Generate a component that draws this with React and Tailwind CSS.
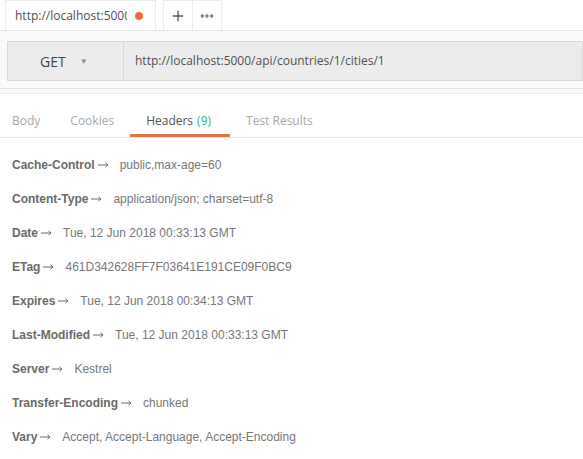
import { Plus, MoreHorizontal } from 'lucide-react'

const headers = [
  ['Cache-Control', 'public,max-age=60'],
  ['Content-Type', 'application/json; charset=utf-8'],
  ['Date', 'Tue, 12 Jun 2018 00:33:13 GMT'],
  ['ETag', '461D342628FF7F03641E191CE09F0BC9'],
  ['Expires', 'Tue, 12 Jun 2018 00:34:13 GMT'],
  ['Last-Modified', 'Tue, 12 Jun 2018 00:33:13 GMT'],
  ['Server', 'Kestrel'],
  ['Transfer-Encoding', 'chunked'],
  ['Vary', 'Accept, Accept-Language, Accept-Encoding'],
]

const tabs = [
  { label: 'Body', cls: 'mr-[30px] pt-[8px]' },
  { label: 'Cookies', cls: 'mr-[16px] pt-[8px]' },
  { label: 'Headers', count: '(9)', cls: 'mr-[16px] border-b-[3px] border-[#e2714a] pl-[16px] pr-[19px] pt-[11px]' },
  { label: 'Test Results', cls: 'pt-[8px]' },
]

function Arrow() {
  return (
    <svg width="11" height="8" viewBox="0 0 11 8" className="ml-[3px] mt-[5px] shrink-0">
      <path d="M0 4H10M7.5 1.8L10 4L7.5 6.2" fill="none" stroke="#6a6a6a" strokeWidth="1" />
    </svg>
  )
}

export default function App() {
  return (
    <div className="h-[459px] w-[583px] overflow-hidden bg-white font-['Open_Sans',sans-serif]">
      {/* tab strip */}
      <div className="flex h-[31px] items-end border-b border-[#e4e4e4] bg-white pl-[5px]">
        <div className="flex h-[30px] w-[151px] items-center justify-between border border-b-0 border-[#ececec] bg-white pl-[9px] pr-[12px]">
          <span className="w-[112px] overflow-hidden whitespace-nowrap text-[12px] text-[#505050]">
            http://localhost:5000/
          </span>
          <span className="h-[8px] w-[8px] rounded-full bg-[#f26b3a]" />
        </div>
        <div className="ml-[7px] flex h-[30px] border border-b-0 border-[#ececec]">
          <div className="flex w-[29px] items-center justify-center border-r border-[#ececec]">
            <Plus size={16} strokeWidth={2} className="text-[#555]" />
          </div>
          <div className="flex w-[28px] items-center justify-center">
            <MoreHorizontal size={16} strokeWidth={3} className="text-[#777]" />
          </div>
        </div>
      </div>

      {/* request bar */}
      <div className="border-b border-[#e2e2e2] bg-[#fafafa] pb-[7px] pl-[7px] pt-[10px]">
        <div className="flex h-[40px] border border-[#d8d8d8] bg-[#ececec]">
          <div className="flex w-[116px] items-center gap-[14px] border-r border-[#d8d8d8] pl-[32px]">
            <span className="text-[14px] text-[#444]">GET</span>
            <span className="text-[8px] text-[#888]">▼</span>
          </div>
          <div className="flex flex-1 items-center pl-[11px] text-[12px] text-[#505050]">
            http://localhost:5000/api/countries/1/cities/1
          </div>
        </div>
      </div>
      <div className="h-[5px] border-b border-[#ececec] bg-[#fafafa]" />

      {/* response tabs */}
      <div className="flex h-[44px] items-end border-b border-[#e6e6e6] pl-[12px]">
        {tabs.map((t) => (
          <div key={t.label} className={`flex h-[40px] items-center ${t.cls}`}>
            <span className={`text-[12px] ${t.count ? 'text-[#505050]' : 'text-[#a8a8a8]'}`}>
              {t.label}
              {t.count && <span className="ml-[4px] text-[#3fae8e]">{t.count}</span>}
            </span>
          </div>
        ))}
      </div>

      {/* headers list */}
      <div className="flex flex-col pl-[12px] pt-[18px] font-['Liberation_Sans',Arial,sans-serif] text-[12px]">
        {headers.map(([k, v]) => (
          <div key={k} className="flex h-[34px] items-start">
            <span className="font-bold text-[#6a6a6a]">{k}</span>
            <Arrow />
            <span className="ml-[11px] text-[#777]">{v}</span>
          </div>
        ))}
      </div>
    </div>
  )
}
